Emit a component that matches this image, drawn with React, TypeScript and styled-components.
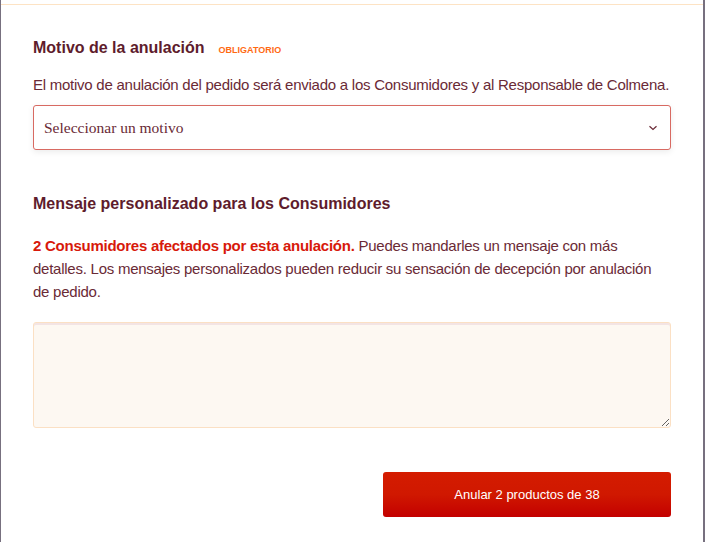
import React, { useState } from 'react';
import styled, { createGlobalStyle } from 'styled-components';

const GlobalStyle = createGlobalStyle`
  html, body {
    margin: 0;
    padding: 0;
    background: #77707f;
  }
  * {
    box-sizing: border-box;
  }
`;

const App = () => {
  const [reason, setReason] = useState('');
  const [message, setMessage] = useState('');

  return (
    <>
      <GlobalStyle />
      <Modal>
        <TopLine />
        <Body>
          <Section>
            <TitleRow>
              <Title>Motivo de la anulación</Title>
              <Required>OBLIGATORIO</Required>
            </TitleRow>
            <Text>
              El motivo de anulación del pedido será enviado a los Consumidores y al Responsable de Colmena.
            </Text>
            <SelectWrap>
              <Select value={reason} onChange={(e) => setReason(e.target.value)}>
                <option value="">Seleccionar un motivo</option>
              </Select>
              <Chevron width="10" height="6" viewBox="0 0 10 6">
                <path d="M1.5 1.2 L5 4.5 L8.5 1.2" fill="none" stroke="#6a2a36" strokeWidth="1.2" />
              </Chevron>
            </SelectWrap>
          </Section>

          <Section>
            <SubTitle>Mensaje personalizado para los Consumidores</SubTitle>
            <Paragraph>
              <Highlight>2 Consumidores afectados por esta anulación.</Highlight> Puedes mandarles un mensaje con más
              detalles. Los mensajes personalizados pueden reducir su sensación de decepción por anulación de pedido.
            </Paragraph>
            <TextArea value={message} onChange={(e) => setMessage(e.target.value)} />
          </Section>

          <Footer>
            <CancelButton type="button">Anular 2 productos de 38</CancelButton>
          </Footer>
        </Body>
      </Modal>
    </>
  );
};

const Modal = styled.div`
  margin: 0 2px 0 1px;
  min-height: 542px;
  background-color: #ffffff;
  padding-top: 4px;
`;

const TopLine = styled.div`
  height: 1px;
  background-color: #fde3c4;
`;

const Body = styled.div`
  padding: 32px 32px 0 32px;
  font-family: 'Liberation Sans', Arial, sans-serif;
  color: #6a2a36;
`;

const Section = styled.div`
  display: flex;
  flex-direction: column;
`;

const TitleRow = styled.div`
  display: flex;
  align-items: baseline;
  gap: 14px;
`;

const Title = styled.h2`
  margin: 0;
  font-size: 16px;
  line-height: 22px;
  font-weight: 700;
  color: #5e1c2c;
`;

const Required = styled.span`
  font-size: 9px;
  font-weight: 700;
  color: #ff6a13;
`;

const Text = styled.p`
  margin: 17px 0 0;
  font-size: 15px;
  line-height: 18px;
  letter-spacing: -0.25px;
`;

const SelectWrap = styled.div`
  position: relative;
  margin-top: 11px;
  margin-bottom: 43px;
`;

const Select = styled.select`
  appearance: none;
  width: 100%;
  height: 45px;
  padding: 0 30px 0 10px;
  border: 1px solid #d86a62;
  border-radius: 3px;
  background-color: #ffffff;
  box-shadow: 0 2px 6px rgba(0, 0, 0, 0.08);
  font-family: 'Liberation Serif', Georgia, serif;
  font-size: 15.5px;
  color: #6a2a36;
  outline: none;
`;

const Chevron = styled.svg`
  position: absolute;
  right: 13px;
  top: 20px;
  pointer-events: none;
`;

const SubTitle = styled.h3`
  margin: 0;
  font-size: 16px;
  line-height: 22px;
  font-weight: 700;
  color: #5e1c2c;
`;

const Paragraph = styled.p`
  margin: 19px 0 0;
  font-size: 15px;
  line-height: 23px;
  letter-spacing: -0.25px;
`;

const Highlight = styled.strong`
  color: #d7190b;
  font-weight: 700;
`;

const TextArea = styled.textarea`
  margin-top: 19px;
  width: 100%;
  height: 106px;
  resize: vertical;
  border: 1px solid #fbe0c4;
  border-radius: 3px;
  background-color: #fdf8f2;
  box-shadow: inset 0 2px 0 #f3e4e4;
  padding: 8px 10px;
  font-family: 'Liberation Sans', Arial, sans-serif;
  font-size: 14px;
  color: #6a2a36;
  outline: none;
`;

const Footer = styled.div`
  display: flex;
  justify-content: flex-end;
  margin-top: 44px;
`;

const CancelButton = styled.button`
  width: 288px;
  height: 45px;
  border: none;
  border-radius: 3px;
  background: linear-gradient(to bottom, #d41c00 0%, #d01800 50%, #c30000 100%);
  color: #ffffff;
  font-family: 'Liberation Sans', Arial, sans-serif;
  font-size: 13px;
  cursor: pointer;

  &:hover {
    opacity: 0.95;
  }
`;

export default App;
